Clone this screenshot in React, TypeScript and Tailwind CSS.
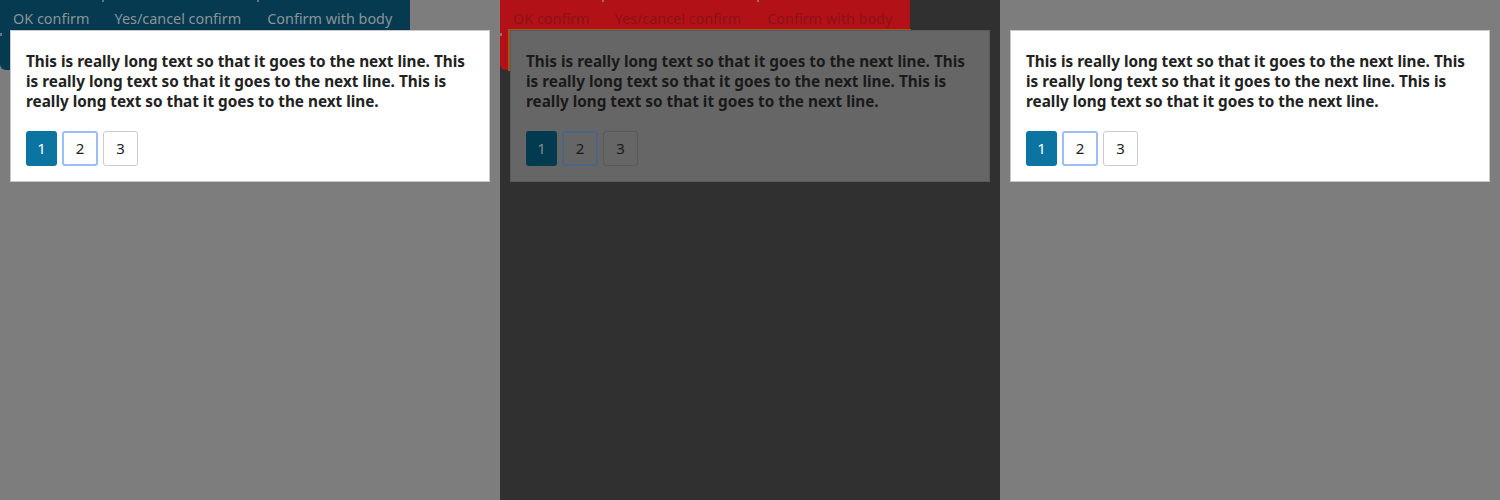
import React from "react";

type Variant = "light" | "dim";

const text =
  "This is really long text so that it goes to the next line. This is really long text so that it goes to the next line. This is really long text so that it goes to the next line.";

function TopBar({ variant }: { variant: Variant }) {
  const dim = variant === "dim";
  return (
    <div
      className={`flex h-[70px] w-[410px] items-start whitespace-nowrap rounded-b-md pt-[8px] pl-[1px] text-[14.4px] ${
        dim ? "bg-[#b31118] text-[#8a1217]" : "bg-[#053a50] text-[#8a9499]"
      }`}
    >
      <span className="px-[12px]">OK confirm</span>
      <span className="px-[13px]">Yes/cancel confirm</span>
      <span className="px-[13px]">Confirm with body</span>
    </div>
  );
}

function Dialog({ variant }: { variant: Variant }) {
  const dim = variant === "dim";
  return (
    <div
      className={`absolute left-[10px] top-[30px] w-[480px] border px-[15px] pt-[20px] pb-[15px] ${
        dim ? "border-[#5a5a5a] bg-[#666666]" : "border-[#c9c9c9] bg-white"
      }`}
    >
      <p className={`text-[15.3px] font-bold leading-[20px] ${dim ? "text-[#1a1a1a]" : "text-[#222222]"}`}>
        {text}
      </p>
      <div className="mt-[20px] flex gap-[5px] text-[15px]">
        <button
          className={`h-[35px] w-[31px] rounded-[3px] ${dim ? "bg-[#023a50] text-[#7f8c91]" : "bg-[#0b74a1] text-white"}`}
        >
          1
        </button>
        <button
          className={`h-[35px] w-[36px] rounded-[3px] border-2 ${
            dim ? "border-[#4d6488] text-[#1a1a1a]" : "border-[#9dbdf5] bg-white text-[#222222]"
          }`}
        >
          2
        </button>
        <button
          className={`h-[35px] w-[35px] rounded-[3px] border ${
            dim ? "border-[#595959] text-[#1a1a1a]" : "border-[#cccccc] bg-white text-[#222222]"
          }`}
        >
          3
        </button>
      </div>
    </div>
  );
}

function Panel({ variant, bar }: { variant: Variant; bar: boolean }) {
  const dim = variant === "dim";
  return (
    <div className={`relative h-[500px] w-[500px] ${dim ? "bg-[#303030]" : "bg-[#7d7d7d]"}`}>
      {bar && <TopBar variant={variant} />}
      {bar && <span className="absolute left-[102px] top-0 h-[2px] w-[2px] bg-[#8a9499]/70" />}
      {bar && <span className="absolute left-[257px] top-0 h-[2px] w-[2px] bg-[#8a9499]/70" />}
      {bar && <span className="absolute left-0 top-[33px] h-[3px] w-[2px] bg-[#8a9499]/70" />}
      {dim && (
        <div className="absolute left-[8px] top-[29px] h-[42px] w-[403px] border-l-2 border-t-2 border-[#9a5a1a]" />
      )}
      <Dialog variant={variant} />
    </div>
  );
}

export default function App() {
  return (
    <div className="flex h-[500px] w-[1500px] font-['Noto_Sans',sans-serif]">
      <Panel variant="light" bar />
      <Panel variant="dim" bar />
      <Panel variant="light" bar={false} />
    </div>
  );
}
